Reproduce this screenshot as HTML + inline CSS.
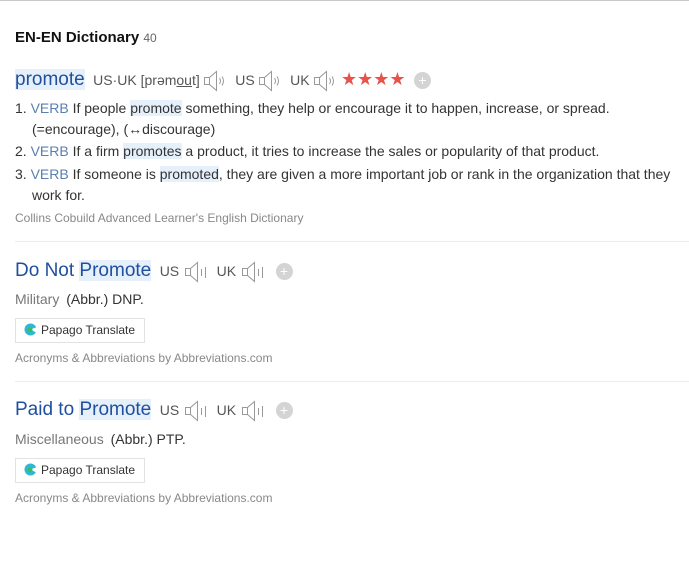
<!DOCTYPE html><html><head><style>
body{margin:0;width:689px;height:565px;background:#fff;font-family:"Liberation Sans",Arial,sans-serif;position:relative;overflow:hidden;border-top:1px solid #c8c8c8;box-sizing:border-box}
.a{position:absolute;white-space:nowrap}
.hl{background:#e6f0fb}
.t{font-size:19px;color:#1f4f9e}
.s{font-size:14px;color:#555}
.d{font-size:14px;color:#333}
.v{color:#5a7fb0}
.src{font-size:12px;color:#888}
.line{position:absolute;left:15px;right:0;height:1px;background:#ececec}
.plus{display:inline-block;width:17px;height:17px;border-radius:50%;background:#d4d4d4;color:#fff;font-size:14px;line-height:17px;text-align:center;vertical-align:middle}
svg{vertical-align:middle}
.btn{position:absolute;left:15px;width:128px;height:23px;border:1px solid #e2e2e2;font-size:12px;color:#333;line-height:23px;box-sizing:content-box}
.sp{margin-left:3px}
</style></head><body>
<div class="a" style="left:15px;top:28px;font-size:15px;font-weight:bold;color:#111">EN-EN Dictionary <span style="font-weight:normal;font-size:12px;color:#666">40</span></div>

<div class="a" style="left:15px;top:67px;line-height:22px">
<span class="t hl">promote</span>
<span class="s" style="margin-left:4px">US·UK [prəm<u>ou</u>t]</span><svg class="sp" width="24" height="22"><g fill="none" stroke="#999"><path d="M1.5 7.5h5v7h-5z M6.5 7.5l7-6v19l-7-6"/><path d="M16.5 8q2 3 0 6"/><path d="M19 6.5q3 4.5 0 9"/></g></svg>
<span class="s" style="margin-left:4px">US</span><svg class="sp" width="24" height="22"><g fill="none" stroke="#999"><path d="M1.5 7.5h5v7h-5z M6.5 7.5l7-6v19l-7-6"/><path d="M16.5 8q2 3 0 6"/><path d="M19 6.5q3 4.5 0 9"/></g></svg>
<span class="s" style="margin-left:4px">UK</span><svg class="sp" width="24" height="22"><g fill="none" stroke="#999"><path d="M1.5 7.5h5v7h-5z M6.5 7.5l7-6v19l-7-6"/><path d="M16.5 8q2 3 0 6"/><path d="M19 6.5q3 4.5 0 9"/></g></svg>
<span style="color:#e8524a;font-size:18px;margin-left:0px">★★★★</span>
<span class="plus" style="margin-left:4px">+</span>
</div>

<div class="a d" style="left:15px;top:97px;line-height:21px">1. <span class="v">VERB</span> If people <span class="hl">promote</span> something, they help or encourage it to happen, increase, or spread.<br><span style="padding-left:17px">(=encourage), (↔discourage)</span></div>
<div class="a d" style="left:15px;top:142px">2. <span class="v">VERB</span> If a firm <span class="hl">promotes</span> a product, it tries to increase the sales or popularity of that product.</div>
<div class="a d" style="left:15px;top:163px;line-height:21px">3. <span class="v">VERB</span> If someone is <span class="hl">promoted</span>, they are given a more important job or rank in the organization that they<br><span style="padding-left:17px">work for.</span></div>
<div class="a src" style="left:15px;top:210px">Collins Cobuild Advanced Learner's English Dictionary</div>
<div class="line" style="top:240px"></div>

<div class="a" style="left:15px;top:259px;line-height:22px"><span class="t">Do Not <span class="hl">Promote</span></span>
<span class="s" style="margin-left:4px">US</span><svg style="margin-left:5px" width="24" height="22"><g fill="none" stroke="#999"><path d="M1.5 7.5h5v7h-5z M6.5 7.5l7-6v19l-7-6"/><path d="M17.5 8v7M21.5 6v11"/></g></svg>
<span class="s" style="margin-left:4px">UK</span><svg style="margin-left:5px" width="24" height="22"><g fill="none" stroke="#999"><path d="M1.5 7.5h5v7h-5z M6.5 7.5l7-6v19l-7-6"/><path d="M17.5 8v7M21.5 6v11"/></g></svg>
<span class="plus" style="margin-left:6px">+</span></div>
<div class="a" style="left:15px;top:290px;font-size:14px"><span style="color:#777">Military</span> <span style="color:#333;margin-left:3px">(Abbr.) DNP.</span></div>
<div class="btn" style="top:317px"><svg width="13" height="13" style="margin:-2px 4px 0 8px"><circle cx="6.5" cy="6.5" r="6" fill="#2db8d6"/><path d="M6.5 6.5L13 4v6z" fill="#fff"/><circle cx="6" cy="7" r="2.5" fill="#3dbb62"/></svg>Papago Translate</div>
<div class="a src" style="left:15px;top:350px">Acronyms &amp; Abbreviations by Abbreviations.com</div>
<div class="line" style="top:380px"></div>

<div class="a" style="left:15px;top:398px;line-height:22px"><span class="t">Paid to <span class="hl">Promote</span></span>
<span class="s" style="margin-left:4px">US</span><svg style="margin-left:5px" width="24" height="22"><g fill="none" stroke="#999"><path d="M1.5 7.5h5v7h-5z M6.5 7.5l7-6v19l-7-6"/><path d="M17.5 8v7M21.5 6v11"/></g></svg>
<span class="s" style="margin-left:4px">UK</span><svg style="margin-left:5px" width="24" height="22"><g fill="none" stroke="#999"><path d="M1.5 7.5h5v7h-5z M6.5 7.5l7-6v19l-7-6"/><path d="M17.5 8v7M21.5 6v11"/></g></svg>
<span class="plus" style="margin-left:6px">+</span></div>
<div class="a" style="left:15px;top:430px;font-size:14px"><span style="color:#777">Miscellaneous</span> <span style="color:#333;margin-left:3px">(Abbr.) PTP.</span></div>
<div class="btn" style="top:457px"><svg width="13" height="13" style="margin:-2px 4px 0 8px"><circle cx="6.5" cy="6.5" r="6" fill="#2db8d6"/><path d="M6.5 6.5L13 4v6z" fill="#fff"/><circle cx="6" cy="7" r="2.5" fill="#3dbb62"/></svg>Papago Translate</div>
<div class="a src" style="left:15px;top:490px">Acronyms &amp; Abbreviations by Abbreviations.com</div>
</body></html>
